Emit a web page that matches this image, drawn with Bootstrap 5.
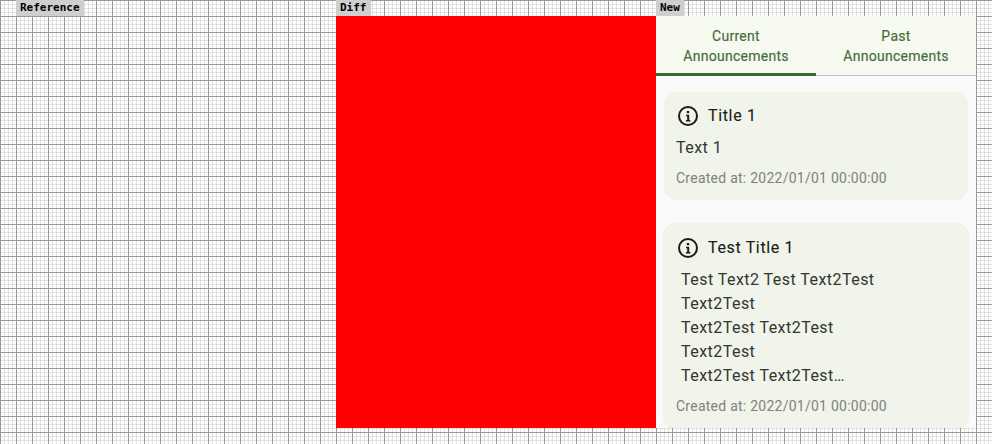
<!DOCTYPE html>
<html lang="en">
<head>
    <meta charset="UTF-8">
    <meta name="viewport" content="width=device-width, initial-scale=1.0">
    <title>Announcements screenshot diff</title>
    <link href="https://cdn.jsdelivr.net/npm/bootstrap@5.3.0/dist/css/bootstrap.min.css" rel="stylesheet">
    <style>
        html, body { height: 100%; }
        body {
            overflow: hidden;
            font-family: Roboto, "Liberation Sans", sans-serif;
            background-color: #fff;
            background-image:
                linear-gradient(to right, #999 1px, transparent 1px),
                linear-gradient(to bottom, #999 1px, transparent 1px),
                linear-gradient(to right, #e0e0e0 1px, transparent 1px),
                linear-gradient(to bottom, #e0e0e0 1px, transparent 1px);
            background-size: 16px 16px, 16px 16px, 4px 4px, 4px 4px;
        }
        .compare-row { padding-left: 16px; }
        .compare-col { width: 320px; }
        .compare-label {
            width: fit-content;
            height: 16px;
            padding: 0 4px;
            background: #cfcfcf;
            color: #000;
            font: bold 11px/15px "DejaVu Sans Mono", monospace;
        }
        .compare-body { height: 412px; }
        .diff-body { background: #f00; }
        .phone { background: #fafafa; overflow: hidden; }
        .tabs-bar { background: #f7faf0; border-bottom: 1px solid #c4c8bc; height: 60px; }
        .tab-item {
            width: 160px;
            height: 60px;
            padding-top: 10px;
            margin-bottom: -1px;
            color: #446a3c;
            font-size: 14px;
            line-height: 20px;
            letter-spacing: .27px;
            text-align: center;
            -webkit-text-stroke: .15px currentColor;
        }
        .tab-active { border-bottom: 3px solid #3f6836; }
        .notice {
            margin: 16px 8px 0;
            padding: 12px;
            background: #f1f4ea;
            border-radius: 12px;
            color: #1a1c18;
        }
        .notice + .notice { margin-top: 24px; box-shadow: 0 0 2px rgba(0, 0, 0, .14); }
        .notice-title { font-size: 16px; line-height: 24px; letter-spacing: .65px; -webkit-text-stroke: .12px currentColor; }
        .notice-text { margin-top: 8px; font-size: 16px; line-height: 24px; letter-spacing: .46px; color: #33352f; }
        .notice-text-long { padding-left: 5px; }
        .notice-date { margin-top: 8px; font-size: 14px; line-height: 20px; letter-spacing: .25px; color: #80827c; }
    </style>
</head>
<body>
    <div class="compare-row d-flex">
        <div class="compare-col">
            <div class="compare-label">Reference</div>
        </div>
        <div class="compare-col">
            <div class="compare-label">Diff</div>
            <div class="compare-body diff-body"></div>
        </div>
        <div class="compare-col">
            <div class="compare-label">New</div>
            <div class="compare-body phone">
                <div class="tabs-bar d-flex">
                    <div class="tab-item tab-active">Current<br>Announcements</div>
                    <div class="tab-item">Past<br>Announcements</div>
                </div>

                <div class="notice">
                    <div class="notice-title d-flex align-items-center gap-2">
                        <svg width="24" height="24" viewBox="0 0 24 24" fill="none">
                            <circle cx="12" cy="12" r="9" stroke="#1a1c18" stroke-width="2"/>
                            <rect x="10.8" y="7" width="2.4" height="2.2" fill="#1a1c18"/>
                            <path d="M10 10.8h3.2v5.2h1.2v1.4H10V16h1.2v-3.8H10z" fill="#1a1c18"/>
                        </svg>
                        Title 1
                    </div>
                    <div class="notice-text">Text 1</div>
                    <div class="notice-date">Created at: 2022/01/01 00:00:00</div>
                </div>

                <div class="notice">
                    <div class="notice-title d-flex align-items-center gap-2">
                        <svg width="24" height="24" viewBox="0 0 24 24" fill="none">
                            <circle cx="12" cy="12" r="9" stroke="#1a1c18" stroke-width="2"/>
                            <rect x="10.8" y="7" width="2.4" height="2.2" fill="#1a1c18"/>
                            <path d="M10 10.8h3.2v5.2h1.2v1.4H10V16h1.2v-3.8H10z" fill="#1a1c18"/>
                        </svg>
                        Test Title 1
                    </div>
                    <div class="notice-text notice-text-long">
                        Test Text2 Test Text2Test<br>
                        Text2Test<br>
                        Text2Test Text2Test<br>
                        Text2Test<br>
                        Text2Test Text2Test…
                    </div>
                    <div class="notice-date">Created at: 2022/01/01 00:00:00</div>
                </div>
            </div>
        </div>
    </div>
    <script src="https://cdn.jsdelivr.net/npm/bootstrap@5.3.0/dist/js/bootstrap.bundle.min.js"></script>
</body>
</html>
